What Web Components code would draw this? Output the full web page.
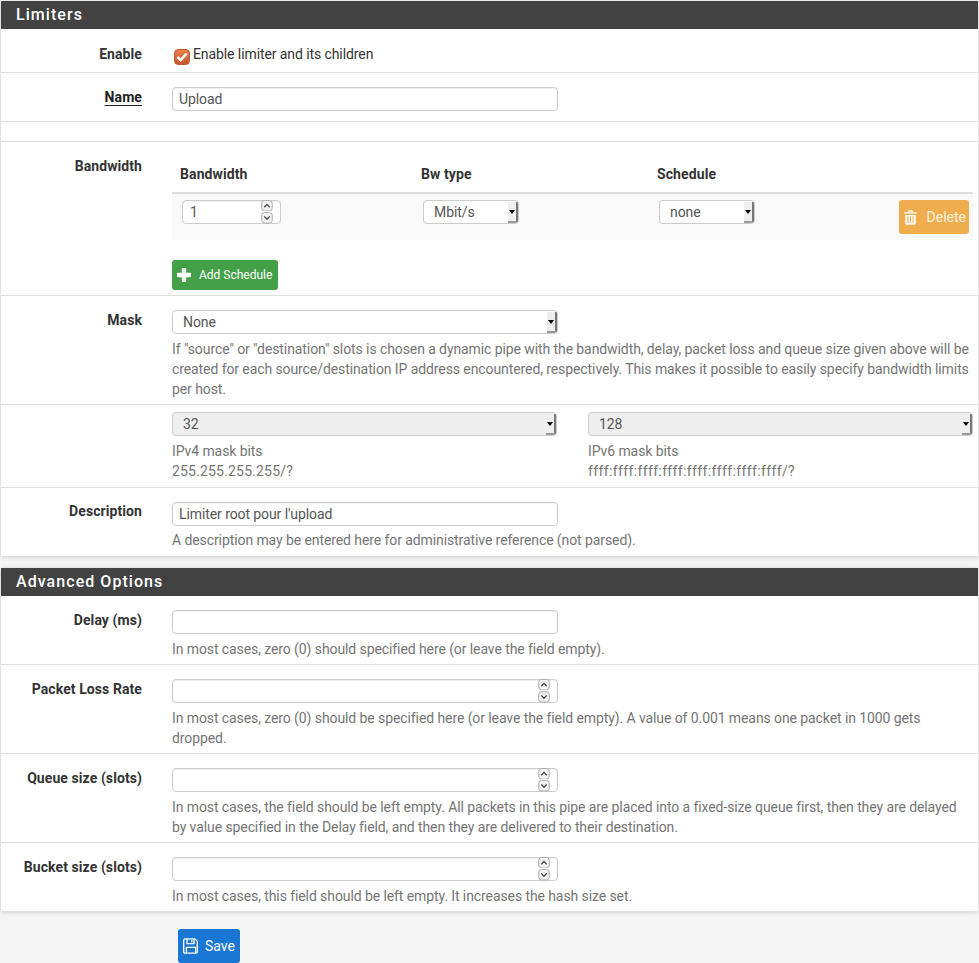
<!DOCTYPE html>
<html lang="en"><head><meta charset="utf-8"><title>Limiters</title>
<style>
html,body{margin:0;padding:0;background:#f5f5f5;height:963px;overflow:hidden}
body{font:14px/20px Roboto,"Liberation Sans",sans-serif;color:#333}
x-page{display:block}
</style></head><body>
<x-page>
<x-panel title="Limiters" h="28">
  <x-row label="Enable" top="15" bottom="8"><x-check>Enable limiter and its children</x-check></x-row>
  <x-row label="Name" underline bottom="10"><x-text value="Upload"></x-text></x-row>
  <x-row empty></x-row>
  <x-row label="Bandwidth" bottom="5">
    <x-schedule>
      <span slot="h1">Bandwidth</span><span slot="h2">Bw type</span><span slot="h3">Schedule</span>
      <x-text slot="c1" value="1" width="99" spin></x-text>
      <x-select slot="c2" value="Mbit/s" width="96"></x-select>
      <x-select slot="c3" value="none" width="96"></x-select>
      <x-btn slot="c4" color="#f0ad4e" icon="trash" text="#fdf1df">Delete</x-btn>
    </x-schedule>
    <x-btn small color="#43a047" icon="plus">Add Schedule</x-btn>
  </x-row>
  <x-row label="Mask" bottom="5"><x-select value="None" width="386"></x-select>
    <x-help>If "source" or "destination" slots is chosen a dynamic pipe with the bandwidth, delay, packet loss and queue size given above will be created for each source/destination IP address encountered, respectively. This makes it possible to easily specify bandwidth limits per host.</x-help></x-row>
  <x-row top="7" bottom="6">
    <x-cols>
      <div><x-select value="32" disabled width="385"></x-select><x-help>IPv4 mask bits<br><span style="letter-spacing:.18px">255.255.255.255/?</span></x-help></div>
      <div><x-select value="128" disabled width="385"></x-select><x-help>IPv6 mask bits<br><span style="letter-spacing:.37px">ffff:ffff:ffff:ffff:ffff:ffff:ffff:ffff/?</span></x-help></div>
    </x-cols></x-row>
  <x-row label="Description" lift bottom="6" last><x-text value="Limiter root pour l'upload"></x-text><x-help tight>A description may be entered here for administrative reference (not parsed).</x-help></x-row>
</x-panel>
<x-panel title="Advanced Options" h="28">
  <x-row label="Delay (ms)" bottom="5"><x-text></x-text><x-help>In most cases, zero (0) should specified here (or leave the field empty).</x-help></x-row>
  <x-row label="Packet Loss Rate" bottom="5"><x-text spin></x-text><x-help>In most cases, zero (0) should be specified here (or leave the field empty). A value of 0.001 means one packet in 1000 gets dropped.</x-help></x-row>
  <x-row label="Queue size (slots)" bottom="5"><x-text spin></x-text><x-help>In most cases, the field should be left empty. All packets in this pipe are placed into a fixed-size queue first, then they are delayed by value specified in the Delay field, and then they are delivered to their destination.</x-help></x-row>
  <x-row label="Bucket size (slots)" bottom="5" last><x-text spin></x-text><x-help>In most cases, this field should be left empty. It increases the hash size set.</x-help></x-row>
</x-panel>
<x-actions><x-btn color="#1976d2" icon="save">Save</x-btn></x-actions>
</x-page>
<script>
const def=(n,fn)=>customElements.define(n,class extends HTMLElement{connectedCallback(){if(this.shadowRoot)return;const s=this.attachShadow({mode:'open'});s.innerHTML=fn(this);}});
const ICONS={
 plus:'<svg width="14" height="14" viewBox="0 0 14 14"><path fill="#fff" d="M4.800 1Q4.800 0 5.800 0h2.400q1 0 1 1v3.800H13q1 0 1 1v2.400q0 1-1 1H9.200V13q0 1-1 1H5.800q-1 0-1-1V9.200H1q-1 0-1-1V5.800q0-1 1-1h3.800z"/></svg>',
 trash:'<svg width="13" height="15" viewBox="0 0 13 15"><path fill="#fff" fill-rule="evenodd" d="M4.200 1.300Q4.500.2 5.500.2h2q1 0 1.300 1.100l.3 1h3.200q.5 0 .5.5v.7H.2v-.7q0-.5.5-.5h3.200zM5.200 2.300h2.600l-.2-.7q0-.2-.3-.2H5.700q-.3 0-.3.2zM1.300 5h10.400v8.300q0 1.500-1.500 1.500H2.800q-1.500 0-1.500-1.500zM3.300 6.300v6.800h1.100V6.300zM5.950 6.300v6.800h1.100V6.300zM8.600 6.300v6.800h1.100V6.300z"/></svg>',
 save:'<svg width="16" height="16" viewBox="0 0 16 16" fill="none" stroke="#fff" stroke-width="1.300"><path d="M1.900.9h10l2.400 2.400v10.500q0 1.300-1.300 1.300H1.900Q.7 15.100.7 13.800V2.200Q.7.900 1.900.9z"/><path d="M4 1v4.600h7V1M8.800 2v2.300"/><path d="M3.400 15V9.300h9.200V15"/></svg>'
};
def('x-panel',e=>`<style>:host{display:block;margin:1px 1px 12px;background:#fff;box-shadow:0 1px 5px rgba(0,0,0,.18)}
.h{background:#424242;color:#fff;height:${e.getAttribute('h')}px;box-sizing:border-box;padding:0 15px;font:500 16px/28px Roboto,sans-serif;letter-spacing:1.05px}</style>
<div class="h">${e.getAttribute('title')}</div><slot></slot>`);
def('x-row',e=>{
 const t=e.getAttribute('top')||14,b=e.getAttribute('bottom')||5,last=e.hasAttribute('last');
 if(e.hasAttribute('empty'))return `<style>:host{display:block;height:19px;border-bottom:1px solid #ddd}</style>`;
 return `<style>:host{display:grid;grid-template-columns:141px 1fr;column-gap:30px;padding:${t}px 6px ${b}px 0;letter-spacing:-.09px;${last?'':'border-bottom:1px solid #ddd;'}}
 .l{text-align:right;font-weight:700;color:#333;height:20px;letter-spacing:.08px;${e.hasAttribute('lift')?'margin-top:-1px;':''}}
 ${e.hasAttribute('underline')?'.l span{text-decoration:underline;text-underline-offset:3px;color:#212121}':''}
 .c{min-width:0}</style><div class="l"><span>${e.getAttribute('label')||''}</span></div><div class="c"><slot></slot></div>`});
def('x-check',e=>`<style>:host{display:flex;align-items:flex-start;height:20px}
.b{width:16px;height:16px;margin:5px 3px 0 2px;border-radius:4px;box-sizing:border-box;border:1px solid #c65a2e;background:linear-gradient(#e8804e,#c4562a);flex:none;display:block}
</style><svg class="b" viewBox="0 0 14 14"><path d="M2.500 7 5.600 10.200 11.500 3.600" fill="none" stroke="#fff" stroke-width="2.600"/></svg><span><slot></slot></span>`);
def('x-text',e=>{const w=e.getAttribute('width')||386,sp=e.hasAttribute('spin');
 return `<style>:host{display:flex;align-items:center;width:${w}px;height:24px;box-sizing:border-box;border:1px solid #ccc;border-radius:4px;background:#fff;padding:0 7px 0 ${w<200?7:6}px;color:#555;box-shadow:inset 0 1px 1px rgba(0,0,0,.06)}
 .v{flex:1;margin-top:-1px}.s{display:flex;flex-direction:column;width:12px;margin-top:-1px;height:24px;gap:1px}
 .s svg{display:block;width:12px;height:11.500px}</style><span class="v">${e.getAttribute('value')||''}</span>${sp?`<span class="s">
 <svg viewBox="0 0 12 12"><rect x=".5" y=".5" width="11" height="11" rx="3" fill="#f2f2f2" stroke="#aaa"/><path d="M3.200 7.500 6 4.600l2.800 2.900" fill="none" stroke="#444" stroke-width="1.400"/></svg>
 <svg viewBox="0 0 12 12"><rect x=".5" y=".5" width="11" height="11" rx="3" fill="#f2f2f2" stroke="#aaa"/><path d="M3.200 4.600 6 7.500l2.800-2.900" fill="none" stroke="#444" stroke-width="1.400"/></svg></span>`:''}`});
def('x-select',e=>{const d=e.hasAttribute('disabled');
 return `<style>:host{display:flex;width:${e.getAttribute('width')}px;height:24px;box-sizing:border-box;border:1px solid #ccc;border-radius:4px;background:${d?'#eee':'#fff'};color:#555;padding-left:10px;overflow:hidden}
 .v{flex:1;line-height:22px}.a{width:8px;border-right:2px solid #777;border-bottom:2px solid #999;background:#eee;display:flex;align-items:center;justify-content:center;margin:1px 0 0}
 .a i{display:block;border:3px solid transparent;border-top:4px solid #000;border-bottom:0}</style><span class="v">${e.getAttribute('value')}</span><span class="a"><i></i></span>`});
def('x-help',e=>`<style>:host{display:block;color:#757575;margin-top:${e.hasAttribute('tight')?4:5}px}</style><slot></slot>`);
def('x-cols',e=>`<style>:host{display:grid;grid-template-columns:385px 385px;column-gap:31px}</style><slot></slot>`);
def('x-btn',e=>{const sm=e.hasAttribute('small'),ic=e.getAttribute('icon');
 return `<style>:host{display:inline-flex;align-items:center;gap:${sm?8:ic==='save'?6:10}px;background:${e.getAttribute('color')};color:${e.getAttribute('text')||'#fff'};border-radius:3px;height:${sm?30:34}px;padding:0 ${sm?6:ic==='save'?5:3}px 0 5px;box-sizing:border-box;font-size:${sm?12:14}px;letter-spacing:0}
 svg{display:block;flex:none}</style>${ICONS[ic]}<span><slot></slot></span>`});
def('x-schedule',e=>`<style>:host{display:block;width:801px;margin-bottom:20px}
.g{display:grid;grid-template-columns:241px 236px 1fr}
.th{border-bottom:2px solid #ddd;padding:8px 0;font-weight:700;color:#333;letter-spacing:.1px}
.th div{padding-left:8px;line-height:20px}
.tr{background:#f9f9f9;height:46px;padding-top:6px;box-sizing:border-box;align-items:start}
.tr>div{padding-left:10px}.e{display:flex;justify-content:space-between;padding-right:4px}</style>
<div class="g th"><div><slot name="h1"></slot></div><div><slot name="h2"></slot></div><div><slot name="h3"></slot></div></div>
<div class="g tr"><div><slot name="c1"></slot></div><div><slot name="c2"></slot></div><div class="e"><slot name="c3"></slot><slot name="c4"></slot></div></div>`);
def('x-actions',e=>`<style>:host{display:block;padding:6px 0 0 178px}</style><slot></slot>`);
def('x-page',e=>`<style>:host{display:block}</style><slot></slot>`);
</script>
</body></html>
